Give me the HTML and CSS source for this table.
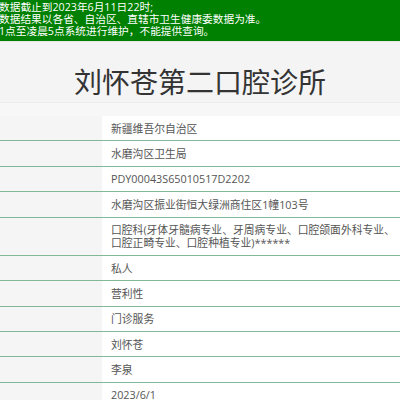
FILE: index.html
```html
<!DOCTYPE html>
<html lang="zh-CN">
<head>
<meta charset="utf-8">
<link rel="stylesheet" href="styles.css">
</head>
<body>
<div class="notice">
  <p>数据截止到2023年6月11日22时;</p>
  <p>数据结果以各省、自治区、直辖市卫生健康委数据为准。</p>
  <p>1点至凌晨5点系统进行维护，不能提供查询。</p>
</div>
<div class="title">刘怀苍第二口腔诊所</div>
<div class="info">
  <div class="row"><div class="label"></div><div class="value">新疆维吾尔自治区</div></div>
  <div class="row"><div class="label"></div><div class="value">水磨沟区卫生局</div></div>
  <div class="row"><div class="label"></div><div class="value">PDY00043S65010517D2202</div></div>
  <div class="row"><div class="label"></div><div class="value">水磨沟区振业街恒大绿洲商住区1幢103号</div></div>
  <div class="row"><div class="label"></div><div class="value">口腔科(牙体牙髓病专业、牙周病专业、口腔颌面外科专业、<br>口腔正畸专业、口腔种植专业)******</div></div>
  <div class="row"><div class="label"></div><div class="value">私人</div></div>
  <div class="row"><div class="label"></div><div class="value">营利性</div></div>
  <div class="row"><div class="label"></div><div class="value">门诊服务</div></div>
  <div class="row"><div class="label"></div><div class="value">刘怀苍</div></div>
  <div class="row"><div class="label"></div><div class="value">李泉</div></div>
  <div class="row"><div class="label"></div><div class="value">2023/6/1</div></div>
</div>
</body>
</html>
```

FILE: styles.css
```css
html, body {
  margin: 0;
  padding: 0;
}
body {
  background: #f7f7f7;
  font-family: "Open Sans", "Noto Sans CJK SC", sans-serif;
  overflow: hidden;
}
.notice {
  background: #008000;
  color: #ffffff;
  font-size: 10.7px;
  line-height: 12px;
  height: 41px;
  padding: 1px 0 0 0;
  box-sizing: border-box;
  white-space: nowrap;
  overflow: hidden;
}
.notice p {
  margin: 0;
  margin-left: -1px;
}
.title {
  background: #f4f4f4;
  border-top: 1px solid #e6e6e6;
  border-bottom: 1px solid #ececec;
  color: #333333;
  font-family: "Noto Sans CJK SC", sans-serif;
  font-size: 28px;
  line-height: 34px;
  text-align: center;
  padding: 22px 0 4px;
  height: 34px;
  margin-bottom: 13px;
}
.info {
  display: flex;
  flex-direction: column;
}
.row {
  display: grid;
  grid-template-columns: 102px 1fr;
  border-bottom: 1px solid #80b898;
}
.label {
  background: #f5f5f5;
}
.value {
  background: #ffffff;
  color: #555555;
  font-size: 10.8px;
  line-height: 13px;
  padding: 5.7px 0 5.7px 9px;
  white-space: nowrap;
  overflow: hidden;
}
```
